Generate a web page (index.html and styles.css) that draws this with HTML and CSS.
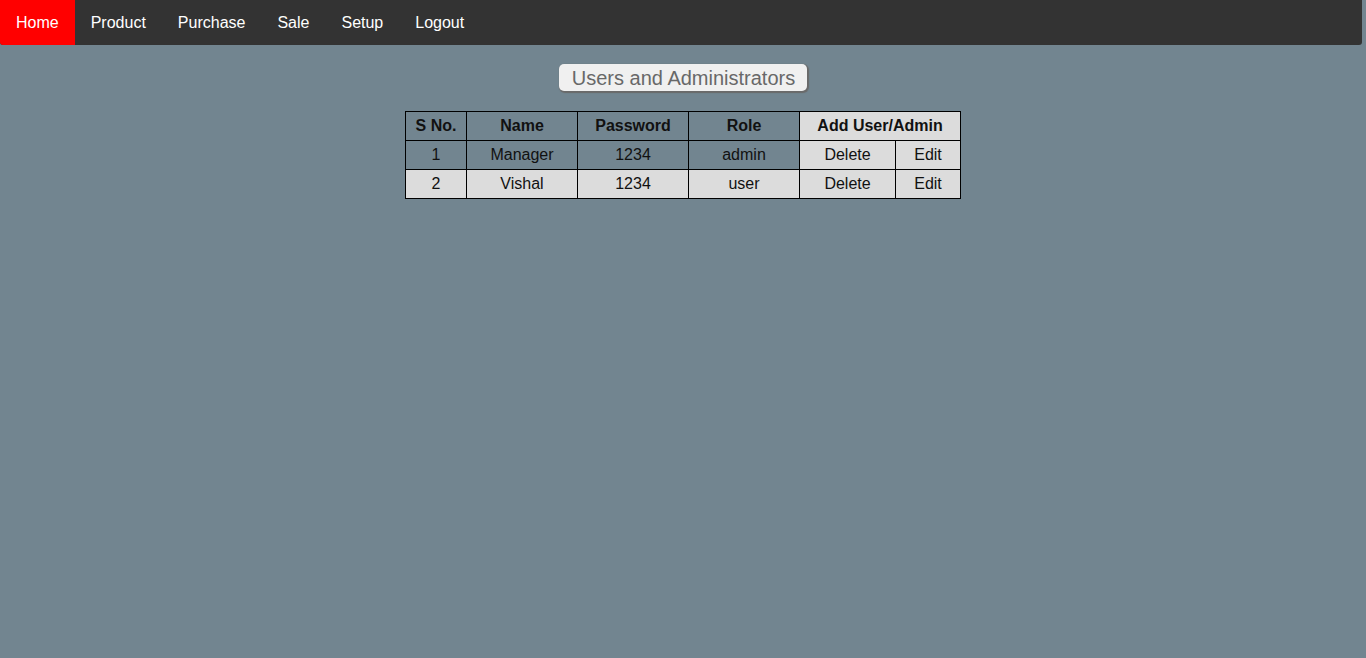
FILE: index.html
```html
<!DOCTYPE html>
<html>
<head>
<meta charset="utf-8">
<title>Users and Administrators</title>
<link rel="stylesheet" href="styles.css">
</head>
<body>
<nav class="navbar">
  <a class="nav-link active" href="#">Home</a>
  <a class="nav-link" href="#">Product</a>
  <a class="nav-link" href="#">Purchase</a>
  <a class="nav-link" href="#">Sale</a>
  <a class="nav-link" href="#">Setup</a>
  <a class="nav-link" href="#">Logout</a>
</nav>
<main class="content">
  <div class="title">Users and Administrators</div>
  <table class="users">
    <thead>
      <tr>
        <th class="c-sno">S No.</th>
        <th class="c-name">Name</th>
        <th class="c-pass">Password</th>
        <th class="c-role">Role</th>
        <th class="c-add" colspan="2">Add User/Admin</th>
      </tr>
    </thead>
    <tbody>
      <tr>
        <td>1</td>
        <td>Manager</td>
        <td>1234</td>
        <td>admin</td>
        <td class="action c-del">Delete</td>
        <td class="action c-edit">Edit</td>
      </tr>
      <tr class="even">
        <td>2</td>
        <td>Vishal</td>
        <td>1234</td>
        <td>user</td>
        <td class="action c-del">Delete</td>
        <td class="action c-edit">Edit</td>
      </tr>
    </tbody>
  </table>
</main>
</body>
</html>
```
FILE: styles.css
```css
html, body {
  margin: 0;
  padding: 0;
  height: 100%;
}
body {
  background: #728590;
  font-family: "Liberation Sans", Arial, sans-serif;
  font-size: 16px;
  overflow: hidden;
}
.navbar {
  display: flex;
  height: 45px;
  background: #333333;
  margin-right: 4px;
  border-radius: 0 0 3px 3px;
  overflow: hidden;
}
.nav-link {
  display: block;
  box-sizing: border-box;
  height: 45px;
  padding: 14px 16px 0 16px;
  line-height: 17px;
  font-size: 16px;
  color: #ffffff;
  text-decoration: none;
}
.nav-link.active {
  background: #ff0000;
}
.content {
  display: flex;
  flex-direction: column;
  align-items: center;
  padding-top: 19px;
}
.title {
  background: #f0f0f0;
  color: #686868;
  font-size: 20px;
  line-height: 23px;
  padding: 3px 12px 1px 13px;
  border-radius: 5px;
  box-shadow: 1px 1px 1px 1px #6a6a6a;
  margin-bottom: 20px;
}
.users {
  border-collapse: collapse;
  text-align: center;
}
.users th, .users td {
  border: 1px solid #000;
  height: 28px;
  padding: 0;
  color: #111;
}
.users th {
  font-weight: bold;
}
.c-sno { width: 60px; }
.c-name, .c-pass, .c-role { width: 110px; }
.c-add { background: #dcdcdc; }
.c-del { width: 95px; }
.c-edit { width: 64px; }
.users td.action { background: #dcdcdc; }
.users tr.even td { background: #dcdcdc; }
```
